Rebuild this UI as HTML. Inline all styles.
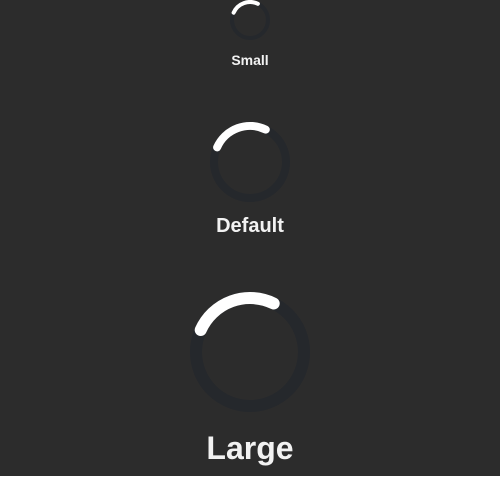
<!DOCTYPE html><html><head><style>
html,body{margin:0;padding:0;width:500px;height:500px;background:#fff;overflow:hidden;font-family:"Liberation Sans",sans-serif;}
.bg{position:absolute;left:0;top:0;width:500px;height:476px;background:#2c2c2c;}
.t{position:absolute;left:0;width:500px;text-align:center;color:#f2f2f2;font-weight:bold;}
</style></head><body>
<div class="bg"></div>
<svg width="500" height="500" style="position:absolute;left:0;top:0" fill="none">
<circle cx="250" cy="20" r="18" stroke="#25282c" stroke-width="4"/>
<path d="M233.6 12.7 A18 18 0 0 1 257.9 3.8" stroke="#fff" stroke-width="4" stroke-linecap="round"/>
<circle cx="250" cy="162" r="36" stroke="#25282c" stroke-width="8"/>
<path d="M217.1 147.4 A36 36 0 0 1 265.8 129.6" stroke="#fff" stroke-width="8" stroke-linecap="round"/>
<circle cx="250" cy="352" r="54" stroke="#25282c" stroke-width="12"/>
<path d="M200.7 330 A54 54 0 0 1 273.7 303.5" stroke="#fff" stroke-width="12" stroke-linecap="round"/>
</svg>
<div class="t" style="top:52px;font-size:14px;">Small</div>
<div class="t" style="top:215px;font-size:20px;">Default</div>
<div class="t" style="top:430px;font-size:32px;">Large</div>
</body></html>
